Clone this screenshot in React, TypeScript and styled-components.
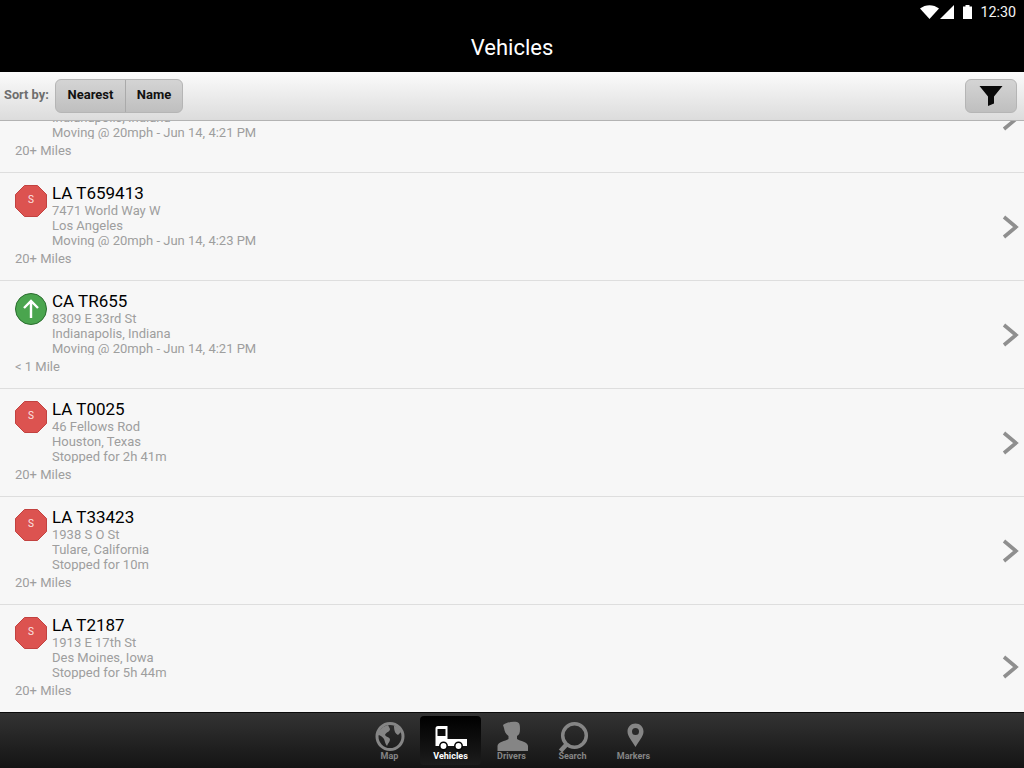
import React from "react";
import styled, { createGlobalStyle } from "styled-components";

const Global = createGlobalStyle`
  html, body { margin: 0; padding: 0; height: 100%; background: #f7f7f7; }
  #root { height: 100%; }
  * { box-sizing: border-box; }
`;
const Page = styled.div`
  width: 1024px; height: 768px; display: flex; flex-direction: column; overflow: hidden;
  font-family: Roboto, "Liberation Sans", sans-serif;
`;
const Header = styled.header`
  height: 72px; background: #000; color: #fff; display: flex; flex-direction: column; flex: none;
`;
const StatusBar = styled.div`
  height: 24px; display: flex; align-items: center; justify-content: flex-end; padding-right: 8px;
  font-size: 14.3px;
`;
const StatusIcon = styled.svg<{ $gap: number }>` margin-right: ${(p) => p.$gap}px; margin-bottom: 1px; flex: none; `;
const Clock = styled.span` color: #f4f4f4; `;
const Title = styled.h1`
  margin: 0; flex: 1; display: flex; align-items: center; justify-content: center;
  font-size: 22px; font-weight: 400; padding-bottom: 1px;
`;
const Toolbar = styled.div`
  height: 49px; flex: none; display: flex; align-items: center; justify-content: space-between;
  padding: 0 7px 0 4px; background: linear-gradient(#fbfbfb, #dcdcdc); border-bottom: 1px solid #b3b3b3;
`;
const SortGroup = styled.div` display: flex; align-items: center; gap: 6px; `;
const SortLabel = styled.span` font-size: 12.8px; font-weight: 700; color: #6e6e6e; margin-bottom: 3px; width: 45px; white-space: nowrap; `;
const Segments = styled.div`
  display: flex; height: 34px; border: 1px solid #b5b5b5; border-radius: 6px; overflow: hidden;
  background: linear-gradient(#d4d4d4, #bfbfbf);
`;
const Segment = styled.button<{ $w: number }>`
  border: 0; background: none; padding: 0 0 3px; width: ${(p) => p.$w}px; font: 700 13px Roboto, sans-serif; color: #111;
  & + & { border-left: 1px solid #aaa; }
`;
const FilterButton = styled.button`
  width: 52px; height: 34px; padding: 0; border: 1px solid #b5b5b5; border-radius: 6px;
  background: linear-gradient(#d4d4d4, #bfbfbf); display: flex; align-items: center; justify-content: center;
`;
const List = styled.main`
  flex: 1; min-height: 0; overflow: hidden; display: flex; flex-direction: column; justify-content: flex-end; background: #f7f7f7;
`;
const Row = styled.div`
  height: 108px; flex: none; display: flex; align-items: center;
  border-top: 1px solid #dedede; padding-left: 15px;
`;
const Content = styled.div` flex: 1; display: flex; flex-direction: column; height: 107px; padding-top: 11px; `;
const Top = styled.div` display: flex; gap: 5px; `;
const Badge = styled.div` width: 32px; height: 32px; flex: none; margin-top: 1px; `;
const Texts = styled.div` display: flex; flex-direction: column; height: 63px; overflow: hidden; `;
const Name = styled.div` font-size: 17px; line-height: 18px; min-height: 18px; color: #000; margin-bottom: 1px; `;
const Line = styled.div` font-size: 13px; line-height: 15px; min-height: 15px; color: #9e9e9e; white-space: nowrap; `;
const Distance = styled.div` font-size: 13px; line-height: 15px; color: #9e9e9e; margin-top: 4px; `;
const Chevron = styled.svg<{ $last?: boolean }>`
  flex: none; margin-right: 5px; margin-top: ${(p) => (p.$last ? 16 : 0)}px;
`;
const TabBar = styled.nav`
  height: 56px; flex: none; background: linear-gradient(#333, #141414); border-top: 1px solid #0b0b0b;
  display: flex; justify-content: center; align-items: flex-start; padding: 3px 1px 0 0;
`;
const Tab = styled.div<{ $active?: boolean }>`
  width: 61px; height: 49px; border-radius: 4px; display: flex; flex-direction: column; align-items: center;
  background: ${(p) => (p.$active ? "linear-gradient(#000, #1c1c1c)" : "transparent")};
  color: ${(p) => (p.$active ? "#fff" : "#858585")};
`;
const TabIcon = styled.svg` height: 33px; width: 36px; margin-top: 3px; flex: none; `;
const TabLabel = styled.span` font-size: 9px; line-height: 11px; font-weight: 700; margin-top: -1px; `;

const Stop = () => (
  <Badge>
    <svg width="32" height="32" viewBox="0 0 32 32">
      <polygon points="9.5,0.5 22.5,0.5 31.5,9.5 31.5,22.5 22.5,31.5 9.5,31.5 0.5,22.5 0.5,9.5" fill="#dc5350" stroke="#c24240" />
      <text x="16" y="18" fontSize="10" fill="#fbe4e4" textAnchor="middle" fontFamily="Roboto, sans-serif">S</text>
    </svg>
  </Badge>
);
const Go = () => (
  <Badge>
    <svg width="32" height="32" viewBox="0 0 32 32">
      <circle cx="16" cy="16" r="15.5" fill="#4aa54e" stroke="#2b6d2f" />
      <path d="M16 25V8M9 15l7-7 7 7" stroke="#fff" strokeWidth="2.4" fill="none" />
    </svg>
  </Badge>
);

const vehicles = [
  { id: 1, name: "", a: "", b: "Indianapolis, Indiana", c: "Moving @ 20mph - Jun 14, 4:21 PM", d: "20+ Miles", go: true },
  { id: 2, name: "LA T659413", a: "7471 World Way W", b: "Los Angeles", c: "Moving @ 20mph - Jun 14, 4:23 PM", d: "20+ Miles" },
  { id: 3, name: "CA TR655", a: "8309 E 33rd St", b: "Indianapolis, Indiana", c: "Moving @ 20mph - Jun 14, 4:21 PM", d: "< 1 Mile", go: true },
  { id: 4, name: "LA T0025", a: "46 Fellows Rod", b: "Houston, Texas", c: "Stopped for 2h 41m", d: "20+ Miles" },
  { id: 5, name: "LA T33423", a: "1938 S O St", b: "Tulare, California", c: "Stopped for 10m", d: "20+ Miles" },
  { id: 6, name: "LA T2187", a: "1913 E 17th St", b: "Des Moines, Iowa", c: "Stopped for 5h 44m", d: "20+ Miles", last: true },
];

export default function App() {
  return (
    <Page>
      <Global />
      <Header>
        <StatusBar>
          <StatusIcon $gap={1} width="19" height="14" viewBox="0 0 19 14"><path d="M0 3.5C5.5-1 13.5-1 19 3.5L9.5 14z" fill="#fff" /></StatusIcon>
          <StatusIcon $gap={9} width="14" height="14" viewBox="0 0 14 14"><path d="M14 0v14H0z" fill="#fff" /></StatusIcon>
          <StatusIcon $gap={8} width="9" height="14" viewBox="0 0 9 14"><path d="M0 1.5h2.5V0h4v1.5H9V14H0z" fill="#fff" /></StatusIcon>
          <Clock>12:30</Clock>
        </StatusBar>
        <Title>Vehicles</Title>
      </Header>
      <Toolbar>
        <SortGroup>
          <SortLabel>Sort by:</SortLabel>
          <Segments>
            <Segment $w={69}>Nearest</Segment>
            <Segment $w={57}>Name</Segment>
          </Segments>
        </SortGroup>
        <FilterButton aria-label="Filter">
          <svg width="24" height="20" viewBox="0 0 24 20"><path d="M0.5 0h23l-8.5 10.5v7l-6 2.5V10.500z" fill="#0a0a0a" /></svg>
        </FilterButton>
      </Toolbar>
      <List>
        {vehicles.map((v) => (
          <Row key={v.id}>
            <Content>
              <Top>
                {v.go ? <Go /> : <Stop />}
                <Texts>
                  <Name>{v.name}</Name>
                  <Line>{v.a}</Line>
                  <Line>{v.b}</Line>
                  <Line>{v.c}</Line>
                </Texts>
              </Top>
              <Distance>{v.d}</Distance>
            </Content>
            <Chevron $last={v.last} width="18" height="24" viewBox="0 0 18 24">
              <path d="M3 2l12 10L3 22" fill="none" stroke="#8f8f8f" strokeWidth="3.6" />
            </Chevron>
          </Row>
        ))}
      </List>
      <TabBar>
        <Tab>
          <TabIcon viewBox="0 0 36 33">
            <circle cx="18" cy="17.500" r="13" fill="none" stroke="currentColor" strokeWidth="3" />
            <path d="M16 6c-4 1-9 4-10.500 10 3 0 5 2 6.500 4 1 2 1 5 3 7 1-3 3-4 3-7-1-2-4-2-5-4 1-3 5-3 5-6zM22 7c3 0 6 2 7 6l-3 3c-2-1-4-3-4-9z" fill="currentColor" />
          </TabIcon>
          <TabLabel>Map</TabLabel>
        </Tab>
        <Tab $active>
          <TabIcon viewBox="0 0 36 33">
            <path fillRule="evenodd" d="M5 7h9.500v13H34v7H2.500V9.500Q2.500 7 5 7zM4.500 10v7h8v-7z" fill="currentColor" />
            <circle cx="10.500" cy="27" r="3.700" fill="#fff" stroke="#000" strokeWidth="1.500" />
            <circle cx="25.500" cy="27" r="3.700" fill="#fff" stroke="#000" strokeWidth="1.500" />
          </TabIcon>
          <TabLabel>Vehicles</TabLabel>
        </Tab>
        <Tab>
          <TabIcon viewBox="0 0 36 33">
            <path d="M3.500 32v-5c0-4 8-5 11-7v-3c-3-2-4-5-4.500-8l-1-3c3-2 8-4 14-3 3 1 3 4 3 7 0 4-1 6-3 7v3c3 2 11 3 11 7v5z" fill="currentColor" />
          </TabIcon>
          <TabLabel>Drivers</TabLabel>
        </Tab>
        <Tab>
          <TabIcon viewBox="0 0 36 33">
            <circle cx="19.500" cy="16.500" r="11.800" fill="none" stroke="currentColor" strokeWidth="3.500" />
            <path d="M11 26L5.500 32" stroke="currentColor" strokeWidth="4.500" />
          </TabIcon>
          <TabLabel>Search</TabLabel>
        </Tab>
        <Tab>
          <TabIcon viewBox="0 0 36 33">
            <path fillRule="evenodd" d="M19.500 4.500c4.500 0 8 3.500 8 8 0 5-5 10-8 15.500-3-5.500-8-10.500-8-15.500 0-4.500 3.500-8 8-8zm0 4.500a3.500 3.500 0 100 7 3.500 3.500 0 000-7z" fill="currentColor" />
          </TabIcon>
          <TabLabel>Markers</TabLabel>
        </Tab>
      </TabBar>
    </Page>
  );
}
